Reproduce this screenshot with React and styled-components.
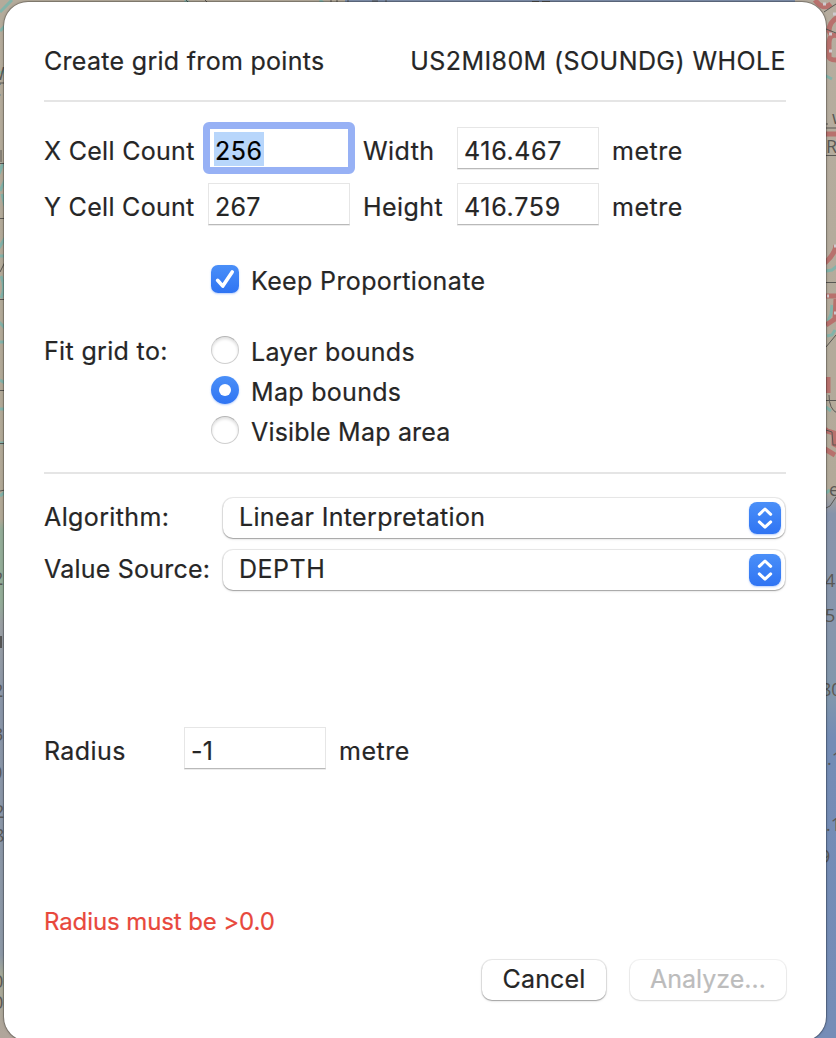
import React from 'react';
import styled, {createGlobalStyle, css} from 'styled-components';

const GlobalStyle = createGlobalStyle`
  * {
    box-sizing: border-box;
  }
  body {
    margin: 0;
    overflow: hidden;
    background: #b1a99b;
  }
`;
const Page = styled.div`
  position: relative;
  width: 836px;
  height: 1038px;
  padding: 2px 10px 0 4px;
  overflow: hidden;
  font-family: Inter, 'Liberation Sans', sans-serif;
  font-size: 25px;
  line-height: 30px;
  color: #262626;
`;
const MapBackdrop = styled.svg`
  position: absolute;
  top: 0;
  left: 0;
`;
const Sheet = styled.main`
  position: relative;
  height: 1039px;
  padding: 0 40px;
  background: #fff;
  border-radius: 24px;
  box-shadow: 0 0 0 1px rgba(0, 0, 0, 0.2), 0 0 3px rgba(0, 0, 0, 0.35);
`;
const Text = styled.span`
  white-space: nowrap;
  letter-spacing: ${({$track = 0.3}) => $track}px;
  -webkit-text-stroke: 0.2px currentColor;
`;
const Header = styled.header`
  display: flex;
  justify-content: space-between;
  align-items: center;
  height: 98px;
  padding-top: 20px;
`;
const Divider = styled.hr`
  height: 2px;
  margin: ${({$top = 0}) => $top}px 0 0;
  border: 0;
  background: #e5e5e5;
`;
const CellGrid = styled.section`
  display: grid;
  grid-template-columns: 164px 155px 94px 155px auto;
  grid-auto-rows: 42px;
  row-gap: 14px;
  margin-top: 25px;
`;
const Label = styled(Text)`
  padding-top: 9px;
`;
const Field = styled.div`
  width: 142px;
  height: 42px;
  padding: 8px 0 0 6px;
  border: 1px solid #e6e6e6;
  border-bottom-color: #b9b9b9;
  background: #fff;
  box-shadow: 0 1px 0 #ececec;
  ${({$focused}) => $focused && css`
    color: #000;
    border: 1px solid #839fe4;
    border-bottom-color: #7590d6;
    outline: 6px solid #97b1f5;
    outline-offset: -1px;
    border-radius: 1px;
    box-shadow: inset 0 0 0 1px #97b1f5;
  `}
`;
const Selection = styled.span`
  display: block;
  width: 50px;
  height: 34px;
  margin: -4px 0 0 -1px;
  padding: 4px 0 0 1px;
  background: #b8d6fb;
`;
const FitGrid = styled.section`
  display: grid;
  grid-template-columns: 167px auto;
  margin-top: 40px;
`;
const FitLabel = styled(Text)`
  padding-top: 71px;
`;
const Options = styled.div`
  display: flex;
  flex-direction: column;
`;
const Option = styled.div`
  display: flex;
  align-items: flex-start;
  gap: 12px;
  height: 40px;
  margin-bottom: ${({$after}) => $after || 0}px;
`;
const OptionText = styled(Text)`
  padding-top: 1px;
`;
const blue = css`
  background: linear-gradient(#4a8ff8, #2f74f3);
  box-shadow: 0 1px 2px rgba(48, 116, 243, 0.35);
`;
const Checkbox = styled.span`
  display: flex;
  width: 28px;
  height: 28px;
  border-radius: 7px;
  ${blue}
`;
const Radio = styled.span`
  display: flex;
  align-items: center;
  justify-content: center;
  width: 28px;
  height: 28px;
  border-radius: 50%;
  border: 1px solid #cfcfcf;
  border-top-color: #b5b5b5;
  box-shadow: inset 0 2px 3px rgba(0, 0, 0, 0.13);
  ${({$checked}) => $checked && css`
    border: 0;
    ${blue}
    &::after {
      content: '';
      width: 12px;
      height: 12px;
      border-radius: 50%;
      background: #fff;
    }
  `}
`;
const Selects = styled.section`
  display: grid;
  grid-template-columns: 179px 1fr;
  row-gap: 12px;
  margin-top: 24px;
`;
const SelectLabel = styled(Text)`
  padding-top: 4px;
`;
const raised = css`
  border-radius: 10px;
  background: #fff;
  box-shadow: 0 0 0 1px rgba(0, 0, 0, 0.08), 0 1px 1px rgba(0, 0, 0, 0.22), 0 1px 3px rgba(0, 0, 0, 0.14);
`;
const Select = styled.div`
  display: flex;
  justify-content: space-between;
  height: 40px;
  margin-right: 1px;
  padding: 4px 4px 4px 16px;
  ${raised}
`;
const Stepper = styled.span`
  display: flex;
  width: 32px;
  height: 32px;
  border-radius: 8px;
  ${blue}
`;
const RadiusRow = styled.section`
  display: grid;
  grid-template-columns: 140px 155px auto;
  margin-top: 137px;
`;
const ErrorText = styled(Text)`
  display: block;
  margin-top: 138px;
  font-size: 24px;
  color: #e8483c;
`;
const Actions = styled.footer`
  display: flex;
  justify-content: flex-end;
  gap: 24px;
  margin-top: 23px;
`;
const Button = styled.button`
  width: ${({$width}) => $width}px;
  height: 40px;
  padding: 0 0 2px;
  border: 0;
  font: inherit;
  color: #262626;
  ${raised}
  &:disabled {
    color: #bcbcbc;
    box-shadow: 0 0 0 1px rgba(0, 0, 0, 0.05), 0 1px 2px rgba(0, 0, 0, 0.12);
  }
`;

const CheckIcon = () => (
  <svg width="28" height="28" viewBox="0 0 28 28" fill="none">
    <path d="M6.6 15.3l5.2 5.8L21.2 7" stroke="#fff" strokeWidth="3.6" strokeLinecap="round" strokeLinejoin="round"/>
  </svg>
);

const StepperIcon = () => (
  <svg width="32" height="32" viewBox="0 0 32 32" fill="none">
    <path d="M10.300 12.300L16 7l5.700 5.300M10.300 19.900L16 25.200l5.700-5.300" stroke="#fff" strokeWidth="3" strokeLinecap="round" strokeLinejoin="round"/>
  </svg>
);

// [x, y, text] of the chart soundings that show at either side of the sheet
const SOUNDINGS = [
  [-12, 80, 'W'], [-10, 96, 'C'], [-7, 585, '2'], [-7, 697, '2'], [-7, 741, '3'], [-8, 779, '0'],
  [-6, 818, '2'], [-6, 842, '8'], [-7, 988, '0'], [-7, 1009, '0'],
  [832, 124, 'w'], [826, 153, 'R'], [829, 496, 'e'], [825, 587, '4'], [825, 622, '55'],
  [821, 696, '80'], [827, 765, '.1'], [826, 831, '.1'], [820, 863, '9'],
];

const ChartMap = () => (
  <MapBackdrop width="836" height="1038" viewBox="0 0 836 1038">
    <defs>
      <linearGradient id="west" x1="0" y1="0" x2="0" y2="1">
        <stop offset="0" stopColor="#b4ab9b"/>
        <stop offset="0.5" stopColor="#b1a896"/>
        <stop offset="0.51" stopColor="#93ad98"/>
        <stop offset="0.58" stopColor="#93ad98"/>
        <stop offset="0.6" stopColor="#9a9fa3"/>
        <stop offset="0.68" stopColor="#8995a8"/>
        <stop offset="0.92" stopColor="#8c98a6"/>
        <stop offset="0.94" stopColor="#a7aa97"/>
        <stop offset="1" stopColor="#b1a59b"/>
      </linearGradient>
      <linearGradient id="east" x1="0" y1="0" x2="0" y2="1">
        <stop offset="0" stopColor="#b6ad9f"/>
        <stop offset="0.47" stopColor="#b2a999"/>
        <stop offset="0.495" stopColor="#8793aa"/>
        <stop offset="0.6" stopColor="#8796ac"/>
        <stop offset="0.67" stopColor="#8197ac"/>
        <stop offset="0.71" stopColor="#748cb5"/>
        <stop offset="1" stopColor="#758db7"/>
      </linearGradient>
    </defs>
    <rect width="418" height="1038" fill="url(#west)"/>
    <rect x="418" width="418" height="1038" fill="url(#east)"/>
    <rect x="345" width="450" height="4" fill="#7e8fab"/>
    <g fill="none" stroke="#83b3a9" strokeWidth="3">
      <path d="M0 12L12 0M0 31l5-5M0 73l5-2M3 163l-4 11M5 180l-5 11M2 194l3 12M-1 248l6-10M0 256h5M1 276q5 12 0 22M-1 322l6 6M0 342h5M0 380l5 3M0 409h5M0 443h5M0 496l5-4"/>
      <path d="M824 75l8 4M826 271l6-1 5-4M832 305l-1 9-3 7M827 336l5-1 3-5M826 407l5 4M826 493l4-3M185 0l5 4M320 0l4 4"/>
    </g>
    <g fill="none" stroke="#b8716d" strokeWidth="5">
      <path d="M815 0q8 11 16 4M838 17q-9 5-9 14l2 4M838 36q-9-3-9 8v13q0 3 9 3M826 134h12M836 245q-1 9-11 18M826 296h10M836 299l-1 20-9 6M828 377v16M825 429l2 2 7 2v11l4 2M825 449l10 6"/>
    </g>
    <path d="M823 4h3M833 14h3M829 34h3M829 51h3M834 246h2M827 296h2M834 313h3" stroke="#d0cbcf" strokeWidth="3"/>
    <g fill="none" stroke="#595753" strokeWidth="1">
      <path d="M0 83h5M0 163.500h5M0 218.500h5M0 272l5-10M0 299.500h5M0 390.500h5M0 443.500h5M0 491l5-1M1 150v12"/>
      <path d="M824 12l12-8M826 29l10 4M826 128h10M826 124h2M826 155.500h10M826 282.500h10M826 347l10-12M826 400.500h10M829 395q0 14 8 18M826 430l6 2 1 13h3M826 508l4-2 6-9M186 0l4 4M205 0l4 4M330 1h2M337 0v3M348 0v3M372 1h6M386 0v2M532 1.500h7M542 1.500h8"/>
    </g>
    <path d="M0 636h2v12H0z" fill="#555"/>
    <g fill="#5a5855" fontFamily="Open Sans" fontSize="18">
      {SOUNDINGS.map(([x, y, value]) => <text key={`${x}-${y}`} x={x} y={y}>{value}</text>)}
    </g>
  </MapBackdrop>
);

const FIT_OPTIONS = [
  {label: 'Layer bounds', track: 0.26},
  {label: 'Map bounds', track: 0.3, checked: true},
  {label: 'Visible Map area', track: 0.2},
];

export default function App() {
  return (
    <Page>
      <GlobalStyle/>
      <ChartMap/>
      <Sheet>
        <Header>
          <Text>Create grid from points</Text>
          <Text $track={0.42}>US2MI80M (SOUNDG) WHOLE</Text>
        </Header>
        <Divider/>
        <CellGrid>
          <Label>X Cell Count</Label>
          <Field $focused><Selection><Text $track={0.5}>256</Text></Selection></Field>
          <Label $track={0.45}>Width</Label>
          <Field><Text $track={0.65}>416.467</Text></Field>
          <Label $track={0.5}>metre</Label>
          <Label>Y Cell Count</Label>
          <Field><Text>267</Text></Field>
          <Label $track={0.45}>Height</Label>
          <Field><Text $track={0.7}>416.759</Text></Field>
          <Label $track={0.5}>metre</Label>
        </CellGrid>
        <FitGrid>
          <FitLabel $track={0.34}>Fit grid to:</FitLabel>
          <Options>
            <Option $after={31}>
              <Checkbox><CheckIcon/></Checkbox>
              <OptionText $track={0.36}>Keep Proportionate</OptionText>
            </Option>
            {FIT_OPTIONS.map(({label, track, checked}) => (
              <Option key={label}>
                <Radio $checked={checked}/>
                <OptionText $track={track}>{label}</OptionText>
              </Option>
            ))}
          </Options>
        </FitGrid>
        <Divider $top={16}/>
        <Selects>
          <SelectLabel $track={0.38}>Algorithm:</SelectLabel>
          <Select><Text $track={0.34}>Linear Interpretation</Text><Stepper><StepperIcon/></Stepper></Select>
          <SelectLabel $track={0.22}>Value Source:</SelectLabel>
          <Select><Text $track={0.5}>DEPTH</Text><Stepper><StepperIcon/></Stepper></Select>
        </Selects>
        <RadiusRow>
          <Label $track={0.4}>Radius</Label>
          <Field><Text>-1</Text></Field>
          <Label $track={0.5}>metre</Label>
        </RadiusRow>
        <ErrorText $track={-0.1}>Radius must be &gt;0.0</ErrorText>
        <Actions>
          <Button $width={124}><Text $track={0.15}>Cancel</Text></Button>
          <Button $width={156} disabled><Text $track={0}>Analyze…</Text></Button>
        </Actions>
      </Sheet>
    </Page>
  );
}
